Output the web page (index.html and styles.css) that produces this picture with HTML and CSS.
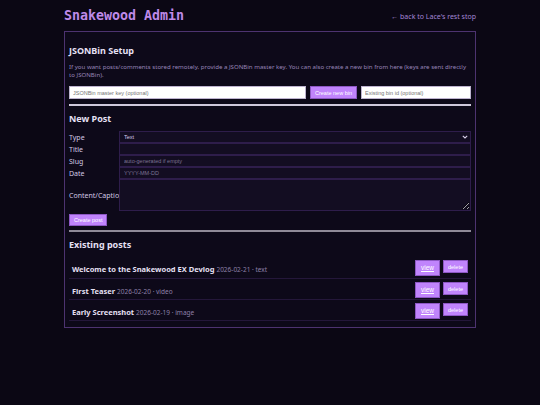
FILE: index.html
```html
<!DOCTYPE html>
<html lang="en">
<head>
    <meta charset="UTF-8">
    <meta name="viewport" content="width=device-width, initial-scale=1.0">
    <title>Snakewood Admin</title>
    <link rel="stylesheet" href="styles.css">
</head>
<body>
    <header class="top">
        <h1>Snakewood Admin</h1>
        <a href="#" class="back">&larr; back to Lace's rest stop</a>
    </header>

    <main class="panel">
        <section>
            <h2>JSONBin Setup</h2>
            <p class="note">If you want posts/comments stored remotely, provide a JSONBin master key. You can also create a new bin from here (keys are sent directly to JSONBin).</p>
            <div class="bin-row">
                <input type="text" class="light key" placeholder="JSONBin master key (optional)">
                <button class="btn">Create new bin</button>
                <input type="text" class="light bin" placeholder="Existing bin id (optional)">
            </div>
        </section>

        <hr>

        <section>
            <h2>New Post</h2>
            <form class="post-form">
                <label for="type">Type</label>
                <div class="select-wrap">
                    <select id="type">
                        <option>Text</option>
                        <option>Video</option>
                        <option>Image</option>
                    </select>
                    <svg class="chevron" width="6" height="4" viewBox="0 0 6 4">
                        <path d="M0.8 0.8 L3 3 L5.2 0.8" fill="none" stroke="#d8d0e8" stroke-width="1.1"/>
                    </svg>
                </div>
                <label for="title">Title</label>
                <input type="text" id="title">
                <label for="slug">Slug</label>
                <input type="text" id="slug" placeholder="auto-generated if empty">
                <label for="date">Date</label>
                <input type="text" id="date" placeholder="YYYY-MM-DD">
                <label for="content" class="tall">Content/Caption</label>
                <textarea id="content"></textarea>
            </form>
            <button class="btn create">Create post</button>
        </section>

        <hr class="dim">

        <section>
            <h2>Existing posts</h2>
            <ul class="posts" id="posts"></ul>
        </section>
    </main>

    <script>
        const posts = [
            { title: 'Welcome to the Snakewood EX Devlog', date: '2026-02-21', type: 'text' },
            { title: 'First Teaser', date: '2026-02-20', type: 'video' },
            { title: 'Early Screenshot', date: '2026-02-19', type: 'image' }
        ];

        const list = document.getElementById('posts');
        posts.forEach(post => {
            list.innerHTML += `<li>
                <div><strong>${post.title}</strong> <span class="meta">${post.date} · ${post.type}</span></div>
                <div class="actions">
                    <a href="#" class="btn view">view</a>
                    <button class="btn">delete</button>
                </div>
            </li>`;
        });
    </script>
</body>
</html>
```

FILE: styles.css
```css
body {
    margin: 0;
    background-color: #0b0714;
    color: #d6cbea;
    font-family: 'Noto Sans', sans-serif;
    font-size: 6.5px;
}
.top {
    width: 412px;
    margin: 0 auto;
    height: 31px;
    display: flex;
    justify-content: space-between;
    align-items: center;
}
h1 {
    margin: 0;
    margin-top: -1px;
    font-family: 'DejaVu Sans Mono', monospace;
    font-size: 13.3px;
    color: #bf8ae8;
}
.back {
    color: #a386d6;
    font-size: 7px;
    text-decoration: none;
    margin-top: 1px;
}
.panel {
    width: 402px;
    margin: 0 auto;
    padding: 6px 4px 6px;
    border: 1px solid #4d3370;
    background-color: #0d0919;
}
h2 {
    margin: 6px 0 6px;
    font-size: 9px;
    color: #e6e0f4;
}
.note {
    margin: 0 0 7px;
    color: #9885b8;
    font-size: 6.1px;
    line-height: 8px;
}
.bin-row {
    display: flex;
    gap: 4px;
}
input, select, textarea, button {
    font-family: 'Liberation Sans', sans-serif;
    font-size: 5.5px;
    box-sizing: border-box;
}
.light {
    height: 13px;
    border: 1px solid #bdb3cf;
    background: #fff;
    padding: 0 3px;
}
.key {
    flex: 1;
}
.bin {
    width: 110px;
}
.btn {
    background-color: #c084fc;
    color: #fff;
    border: 1px solid #8d58c4;
    padding: 0 4px;
    height: 13px;
}
hr {
    margin: 5px 0 0;
    border: none;
    border-top: 2px solid #cfc8dc;
}
hr.dim {
    border-top-color: #8f8a98;
    margin-top: 4px;
}
.post-form {
    display: grid;
    grid-template-columns: 50px 1fr;
    align-items: center;
}
label {
    font-size: 7px;
    color: #d2c8e4;
    white-space: nowrap;
}
.post-form input, .post-form select, .post-form textarea {
    width: 100%;
    height: 12px;
    background-color: #130d22;
    border: 1px solid #2e1d4b;
    color: #d6cbea;
    padding: 0 4px;
    margin: 0;
    display: block;
}
.post-form select {
    appearance: none;
    -webkit-appearance: none;
}
.select-wrap {
    position: relative;
}
.chevron {
    position: absolute;
    right: 3px;
    top: 4px;
}
.post-form input::placeholder {
    color: #7d7294;
}
.post-form textarea {
    height: 32px;
    resize: vertical;
}
.create {
    margin-top: 3px;
    height: 12px;
}
.posts {
    list-style: none;
    margin: 0;
    padding: 0;
}
.posts li {
    display: flex;
    justify-content: space-between;
    align-items: flex-start;
    padding: 3px 3px 3px;
    height: 21px;
    box-sizing: border-box;
    border-bottom: 1px solid #24173a;
}
.posts li > div:first-child {
    padding-top: 4px;
    font-size: 7.5px;
}
.posts strong {
    color: #e6e0f4;
}
.meta {
    color: #8e80a8;
    font-size: 6.5px;
}
.actions {
    display: flex;
    gap: 3px;
    align-items: flex-start;
}
.view {
    display: inline-block;
    height: 16px;
    line-height: 14px;
    box-sizing: border-box;
    padding: 0 5px;
    font-family: 'Liberation Sans', sans-serif;
    font-size: 6.5px;
    text-decoration: underline;
}
.posts li:first-child {
    height: 22px;
}
```
